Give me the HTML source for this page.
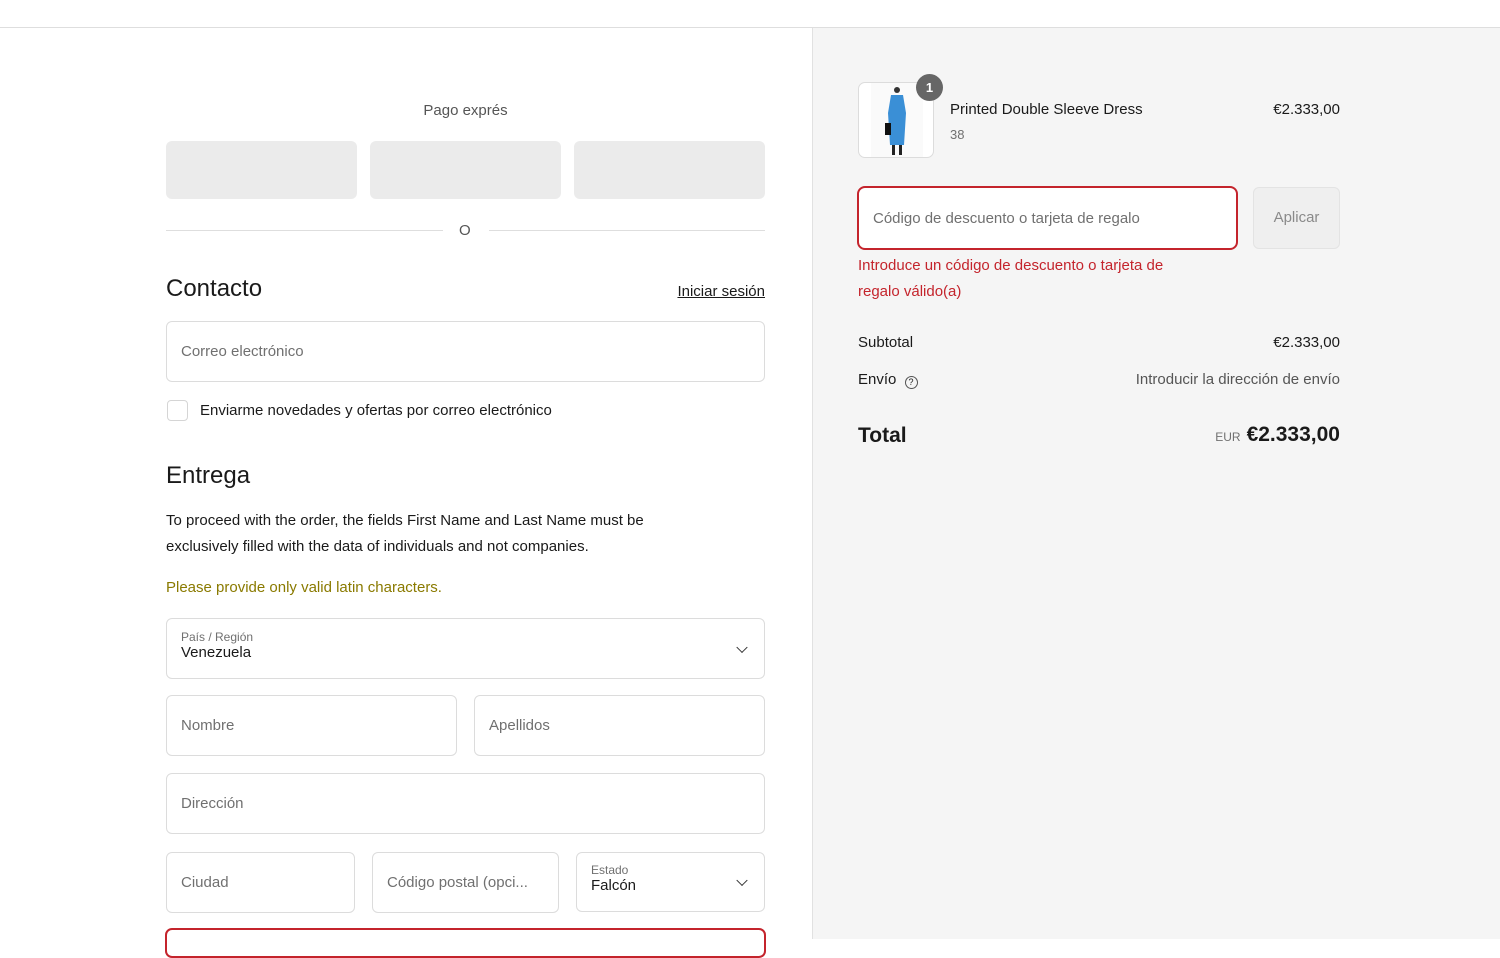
<!DOCTYPE html>
<html><head><meta charset="utf-8"><style>
*{box-sizing:border-box;margin:0;padding:0}
body{width:1500px;height:939px;overflow:hidden;background:#fff;font-family:"Liberation Sans",sans-serif;color:#1a1a1a;position:relative}
.a{position:absolute}
.top{left:0;top:0;width:1500px;height:28px;border-bottom:1px solid #dedede;background:#fff}
.right{left:812px;top:28px;width:688px;height:911px;background:#f5f5f5;border-left:1px solid #e1e1e1}
.btn{top:141px;width:191px;height:58px;background:#ebebeb;border-radius:6px}
.inp{border:1px solid #dcdcdc;border-radius:6px;background:#fff;font-size:15px;color:#707070;padding-left:14px;display:flex;align-items:center}
.chev{position:absolute;right:18px;top:50%;width:8px;height:8px;border-right:1.5px solid #333;border-bottom:1.5px solid #333;transform:translateY(-70%) rotate(45deg)}
.sm{font-size:12px;color:#707070}
.val{font-size:15px;color:#1a1a1a}
.r{text-align:right;width:200px}
</style></head><body>
<div class="a top"></div>
<div class="a right"></div>

<div class="a" style="left:166px;top:102px;width:599px;text-align:center;font-size:15px;color:#555">Pago exprés</div>
<div class="a btn" style="left:166px"></div>
<div class="a btn" style="left:370px"></div>
<div class="a btn" style="left:574px"></div>
<div class="a" style="left:166px;top:230px;width:277px;height:1px;background:#dedede"></div>
<div class="a" style="left:489px;top:230px;width:276px;height:1px;background:#dedede"></div>
<div class="a" style="left:459px;top:222px;font-size:15px;color:#555">O</div>

<div class="a" style="left:166px;top:275px;font-size:24px">Contacto</div>
<div class="a" style="left:565px;top:283px;font-size:15px;text-decoration:underline;width:200px;text-align:right">Iniciar sesión</div>
<div class="a inp" style="left:166px;top:321px;width:599px;height:61px">Correo electrónico</div>
<div class="a" style="left:167px;top:400px;width:21px;height:21px;border:1px solid #d5d5d5;border-radius:4px"></div>
<div class="a" style="left:200px;top:402px;font-size:15px">Enviarme novedades y ofertas por correo electrónico</div>

<div class="a" style="left:166px;top:462px;font-size:24px">Entrega</div>
<div class="a" style="left:166px;top:508px;font-size:15px;line-height:26px;width:545px">To proceed with the order, the fields First Name and Last Name must be exclusively filled with the data of individuals and not companies.</div>
<div class="a" style="left:166px;top:579px;font-size:15px;color:#8a7a00">Please provide only valid latin characters.</div>

<div class="a inp" style="left:166px;top:618px;width:599px;height:61px;display:block;padding-top:11px"><div class="sm">País / Región</div><div class="val">Venezuela</div><span class="chev"></span></div>
<div class="a inp" style="left:166px;top:695px;width:291px;height:61px">Nombre</div>
<div class="a inp" style="left:474px;top:695px;width:291px;height:61px">Apellidos</div>
<div class="a inp" style="left:166px;top:773px;width:599px;height:61px">Dirección</div>
<div class="a inp" style="left:166px;top:852px;width:189px;height:61px">Ciudad</div>
<div class="a inp" style="left:372px;top:852px;width:187px;height:61px">Código postal (opci...</div>
<div class="a inp" style="left:576px;top:852px;width:189px;height:60px;display:block;padding-top:10px"><div class="sm">Estado</div><div class="val">Falcón</div><span class="chev"></span></div>
<div class="a" style="left:165px;top:928px;width:601px;height:30px;border:2px solid #c4242c;border-radius:7px"></div>

<!-- right -->
<div class="a" style="left:858px;top:82px;width:76px;height:76px;border:1px solid #dcdcdc;border-radius:7px;background:#fff;overflow:hidden">
<svg width="76" height="76" viewBox="0 0 76 76"><rect x="12" y="0" width="52" height="76" fill="#fafafa"/>
<circle cx="38" cy="7" r="3" fill="#333"/><path d="M32 12 L44 12 L47 30 L45 62 L31 62 L29 30Z" fill="#3a8fd6"/><rect x="26" y="40" width="6" height="12" fill="#111"/><rect x="33" y="62" width="3" height="10" fill="#222"/><rect x="40" y="62" width="3" height="10" fill="#222"/></svg></div>
<div class="a" style="left:916px;top:74px;width:27px;height:27px;border-radius:50%;background:#666;color:#fff;font-size:13px;font-weight:bold;text-align:center;line-height:27px">1</div>
<div class="a" style="left:950px;top:101px;font-size:15px">Printed Double Sleeve Dress</div>
<div class="a" style="left:950px;top:127px;font-size:13px;color:#707070">38</div>
<div class="a r" style="left:1140px;top:101px;font-size:15px">€2.333,00</div>

<div class="a inp" style="left:857px;top:186px;width:381px;height:64px;border:2px solid #c4242c;border-radius:8px">Código de descuento o tarjeta de regalo</div>
<div class="a" style="left:1253px;top:187px;width:87px;height:62px;border:1px solid #e3e3e3;border-radius:6px;background:#efefef;color:#8a8a8a;font-size:15px;text-align:center;line-height:60px">Aplicar</div>
<div class="a" style="left:858px;top:253px;font-size:15px;line-height:26px;color:#c4242c;width:345px">Introduce un código de descuento o tarjeta de regalo válido(a)</div>

<div class="a" style="left:858px;top:334px;font-size:15px">Subtotal</div>
<div class="a r" style="left:1140px;top:334px;font-size:15px">€2.333,00</div>
<div class="a" style="left:858px;top:371px;font-size:15px">Envío <span style="display:inline-block;width:13px;height:13px;border:1.3px solid #555;border-radius:50%;font-size:9px;text-align:center;line-height:11px;vertical-align:-1px;margin-left:4px">?</span></div>
<div class="a" style="left:1040px;top:371px;font-size:15px;color:#555;width:300px;text-align:right">Introducir la dirección de envío</div>
<div class="a" style="left:858px;top:424px;font-size:21px;font-weight:bold">Total</div>
<div class="a" style="left:1100px;top:423px;width:240px;text-align:right"><span style="font-size:12px;color:#707070;margin-right:6px">EUR</span><span style="font-size:21px;font-weight:bold">€2.333,00</span></div>
</body></html>
